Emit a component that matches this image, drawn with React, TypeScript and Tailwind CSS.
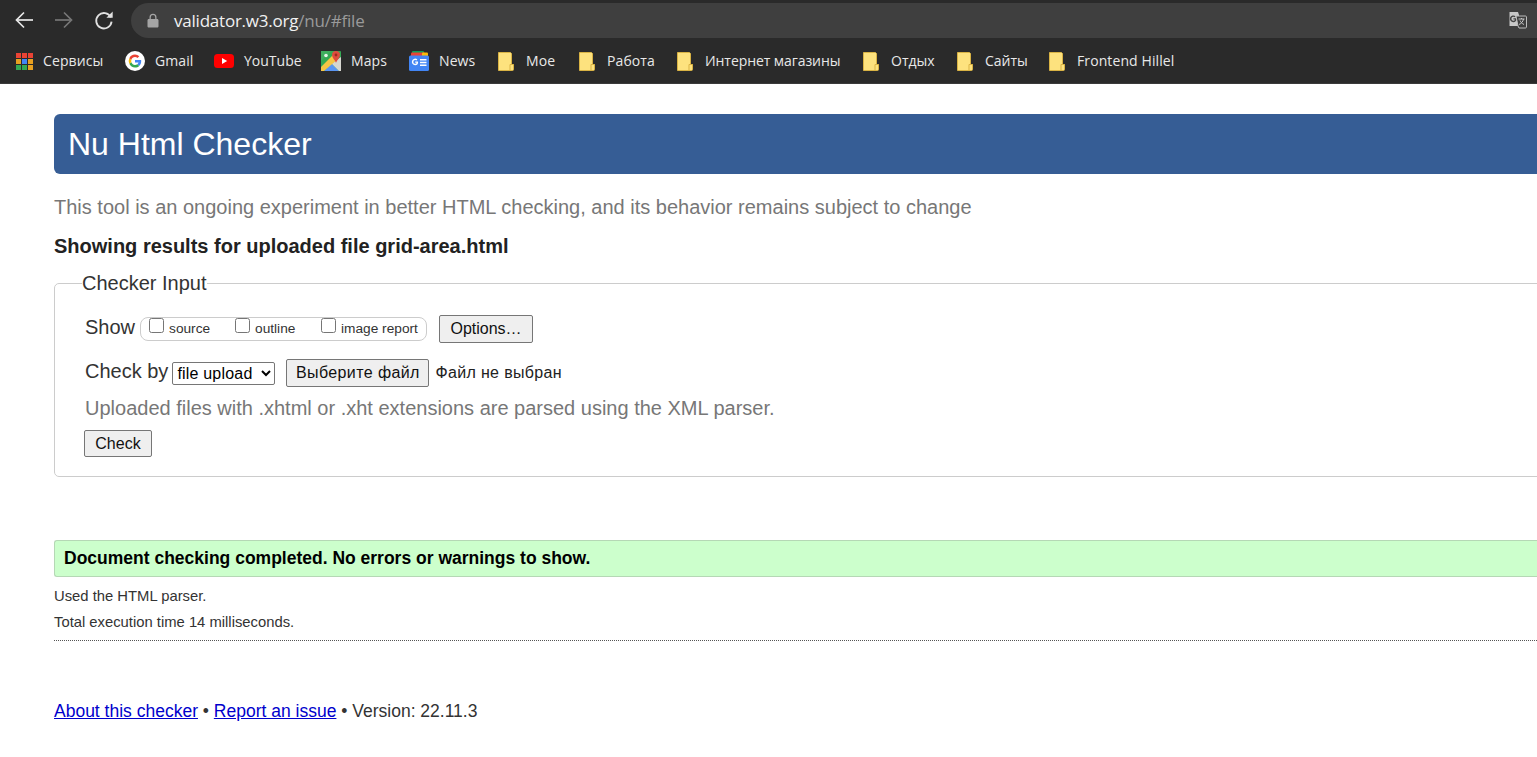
import React from "react";

const uiFont = "font-['Open_Sans',sans-serif]";

const BackIcon = ({ color }: { color: string }) => (
  <svg width="24" height="24" viewBox="0 0 24 24" fill="none" stroke={color} strokeWidth="1.700">
    <path d="M21 12H5" />
    <path d="M12 4.500L4.500 12l7.500 7.500" />
  </svg>
);

const ForwardIcon = ({ color }: { color: string }) => (
  <svg width="24" height="24" viewBox="0 0 24 24" fill="none" stroke={color} strokeWidth="1.700">
    <path d="M3 12h16" />
    <path d="M12 4.500l7.500 7.500-7.500 7.500" />
  </svg>
);

const ReloadIcon = () => (
  <svg width="26" height="26" viewBox="0 0 24 24" fill="none" stroke="#e0e0e0" strokeWidth="1.700">
    <path d="M18.300 9.500A7.100 7.100 0 1 0 19 13.500" />
    <path d="M20 4.200V10h-5.800z" fill="#e0e0e0" stroke="none" />
  </svg>
);

const LockIcon = () => (
  <svg width="12" height="15" viewBox="0 0 12 15" fill="#a5a5a5">
    <path d="M2.500 6V4.200a3.500 3.500 0 0 1 7 0V6h.7c.7 0 1.300.6 1.300 1.300v5.900c0 .7-.6 1.300-1.300 1.300H1.800c-.7 0-1.300-.6-1.300-1.300V7.300C.5 6.600 1.100 6 1.800 6h.7zm1.300 0h4.400V4.200a2.200 2.200 0 0 0-4.400 0V6z" />
  </svg>
);

const TranslateIcon = () => (
  <svg width="19" height="18" viewBox="0 0 19 18">
    <path d="M1.500 1h8.500l1 3v11H1.500z" fill="#c8c8c8" />
    <path d="M8 7.200H5.400v1.300H7c-.2.9-.8 1.300-1.600 1.300a2 2 0 0 1 0-4c.5 0 .9.2 1.200.5l1-1a3.400 3.400 0 1 0-2.200 5.900c2 0 3-1.400 3-3.300z" fill="#444" />
    <path d="M8 5h9.500c.5 0 1 .4 1 1v10c0 .6-.5 1-1 1H11l-1-2z" fill="#3e3e3e" stroke="#bdbdbd" strokeWidth="1" />
    <path d="M10.500 8h6M13.500 7v1M15.500 8c-.5 2.500-2 4.500-4.500 5.500M12 9.500c.8 1.800 2 3 4 4" fill="none" stroke="#c8c8c8" strokeWidth="1" />
  </svg>
);

const AppsIcon = () => {
  const colors = ["#ea4335", "#ea4335", "#ea4335", "#e8a020", "#4285f4", "#e8a020", "#34a853", "#34a853", "#e8a020"];
  return (
    <div className="grid grid-cols-3 gap-[1px] w-[17px] h-[17px]">
      {colors.map((c, i) => (
        <span key={i} className="block w-[5px] h-[5px]" style={{ backgroundColor: c }} />
      ))}
    </div>
  );
};

const GoogleIcon = () => (
  <svg width="20" height="20" viewBox="0 0 20 20">
    <circle cx="10" cy="10" r="10" fill="#fff" />
    <path d="M16.200 10.200c0-.5 0-.9-.1-1.300H10v2.500h3.500c-.2.800-.6 1.500-1.300 2l2 1.600c1.200-1.100 2-2.800 2-4.800z" fill="#4285f4" />
    <path d="M10 16.500c1.800 0 3.200-.6 4.200-1.600l-2-1.600c-.6.400-1.300.6-2.200.6-1.700 0-3.100-1.100-3.600-2.700l-2.100 1.600c1 2.200 3.200 3.700 5.700 3.700z" fill="#34a853" />
    <path d="M6.400 11.200a3.900 3.900 0 0 1 0-2.400L4.300 7.200a6.500 6.500 0 0 0 0 5.600z" fill="#fbbc05" />
    <path d="M10 6.100c1 0 1.800.3 2.500 1l1.800-1.800A6.300 6.300 0 0 0 10 3.500a6.500 6.500 0 0 0-5.700 3.700l2.100 1.600C6.900 7.200 8.300 6.100 10 6.100z" fill="#ea4335" />
  </svg>
);

const YoutubeIcon = () => (
  <svg width="20" height="14" viewBox="0 0 20 14">
    <rect width="20" height="14" rx="3.500" fill="#f00" />
    <path d="M8 4l5.200 3L8 10z" fill="#fff" />
  </svg>
);

const MapsIcon = () => (
  <svg width="20" height="20" viewBox="0 0 20 20">
    <rect width="20" height="20" rx="1" fill="#34a853" />
    <path d="M3 20l7.500-7.500L18 20z" fill="#5a95f2" />
    <path d="M10.500 12.500L20 6v14h-2z" fill="#d6d6d0" />
    <path d="M0 16L14 2l3 6L3 20H0z" fill="#f6c545" />
    <path d="M0 0h10L0 10z" fill="#3fae5e" />
    <circle cx="5" cy="4.500" r="1.800" fill="#e8f4ea" />
    <path d="M15 0a4 4 0 0 1 4 4c0 2.800-3 5-4 7.800-1-2.800-4-5-4-7.800a4 4 0 0 1 4-4z" fill="#dd4b3e" />
    <circle cx="15" cy="4" r="1.400" fill="#9c2a1e" />
  </svg>
);

const NewsIcon = () => (
  <svg width="20" height="20" viewBox="0 0 20 20">
    <rect x="3" y="0" width="12" height="6" rx="1" fill="#0c9d58" />
    <rect x="2" y="1.500" width="14" height="5" rx="1" fill="#ea4335" />
    <rect x="13" y="1.500" width="6" height="6" rx="1" fill="#fbbc05" />
    <rect x="0" y="4.500" width="20" height="15.500" rx="1.500" fill="#4285f4" />
    <path d="M9 10.500H6.200v1.300h1.500c-.2.700-.7 1-1.500 1a1.900 1.900 0 0 1 0-3.800c.5 0 .9.200 1.200.5l1-1a3.300 3.300 0 1 0-2.200 5.700c1.900 0 2.900-1.300 2.900-3z" fill="#fff" />
    <path d="M11 8h6.500v1.400H11zM11 10.800h6.500v1.400H11zM11 13.500h6.500v1.400H11z" fill="#fff" />
  </svg>
);

const FolderIcon = () => (
  <svg width="16" height="19" viewBox="0 0 16 19">
    <path d="M.5.500h12l1 1v11h2v5c0 .6-.4 1-1 1H.5z" fill="#fde27e" stroke="#d9b344" strokeWidth="1" />
    <path d="M12 18v-5.500h3.500" fill="none" stroke="#d9b344" strokeWidth="1" />
  </svg>
);

const bookmarks: { icon: React.ReactNode; label: string; width: string; gap: string; track: string }[] = [
  { icon: <AppsIcon />, label: "Сервисы", width: "w-[109px]", gap: "ml-[7px]", track: "tracking-[0.1px]" },
  { icon: <GoogleIcon />, label: "Gmail", width: "w-[89px]", gap: "ml-[10px]", track: "tracking-[0.1px]" },
  { icon: <YoutubeIcon />, label: "YouTube", width: "w-[107px]", gap: "ml-[10px]", track: "tracking-[0px]" },
  { icon: <MapsIcon />, label: "Maps", width: "w-[88px]", gap: "ml-[10px]", track: "tracking-[0.1px]" },
  { icon: <NewsIcon />, label: "News", width: "w-[89px]", gap: "ml-[10px]", track: "tracking-[0.1px]" },
  { icon: <FolderIcon />, label: "Мое", width: "w-[81px]", gap: "ml-[8px]", track: "tracking-[0.1px]" },
  { icon: <FolderIcon />, label: "Работа", width: "w-[98px]", gap: "ml-[8px]", track: "tracking-[0.1px]" },
  { icon: <FolderIcon />, label: "Интернет магазины", width: "w-[186px]", gap: "ml-[8px]", track: "tracking-[-0.07px]" },
  { icon: <FolderIcon />, label: "Отдых", width: "w-[94px]", gap: "ml-[8px]", track: "tracking-[0px]" },
  { icon: <FolderIcon />, label: "Сайты", width: "w-[92px]", gap: "ml-[8px]", track: "tracking-[0px]" },
  { icon: <FolderIcon />, label: "Frontend Hillel", width: "w-[140px]", gap: "ml-[8px]", track: "tracking-[0.1px]" },
];

const BrowserChrome = () => (
  <div className={`bg-[#2a2a2a] border-b border-[#3a3a3a] ${uiFont}`}>
    <div className="flex items-center h-[40px] pl-[12px]">
      <div className="flex items-center gap-[16px] w-[119px]">
        <BackIcon color="#e8e8e8" />
        <ForwardIcon color="#777777" />
        <div className="-ml-[1px]">
          <ReloadIcon />
        </div>
      </div>
      <div className="flex items-center flex-1 h-[35px] bg-[#3f3f3f] rounded-l-full pl-[16px] pr-[10px]">
        <LockIcon />
        <div className="ml-[15px] text-[17px] leading-none flex-1 tracking-[-0.22px]">
          <span className="text-[#f1f1f1]">validator.w3.org</span>
          <span className="text-[#9a9a9a]">/nu/#file</span>
        </div>
        <TranslateIcon />
      </div>
    </div>
    <div className="flex items-center h-[43px] pb-[1px] pl-[16px]">
      {bookmarks.map((b) => (
        <div key={b.label} className={`flex items-center shrink-0 ${b.width}`}>
          <div className="w-[20px] flex items-center justify-start">{b.icon}</div>
          <span className={`${b.gap} ${b.track} text-[14px] leading-none text-[#e8e8e8] whitespace-nowrap`}>
            {b.label}
          </span>
        </div>
      ))}
    </div>
  </div>
);

const nativeBtn =
  "bg-[#efefef] border border-[#767676] rounded-[2px] text-[16px] text-[#111] leading-none";

const Checkbox = ({ label, width }: { label: string; width: string }) => (
  <label className={`flex items-center mb-[4px] ${width}`}>
    <input type="checkbox" className="w-[15px] h-[15px] m-0 ml-[2px] mr-[5px] -mt-[2px]" />
    <span className="text-[13.7px] leading-none text-[#333] mt-[4px]">{label}</span>
  </label>
);

const CheckerForm = () => (
  <fieldset className="border border-[#ccc] rounded-[5px] -mr-2 pl-[30px] pt-[21px] pb-[19px] mt-[16px]">
    <legend className="text-[20px] leading-[23px] text-[#333] -ml-[3px] -mb-px">Checker Input</legend>
    <div className="flex items-center h-[28px]">
      <span className="text-[20px] text-[#333] leading-none mb-[4px]">Show</span>
      <div className="flex items-center ml-[5px] w-[287px] h-[24px] border border-[#ccc] rounded-[8px] pl-[6px]">
        <Checkbox label="source" width="w-[86px]" />
        <Checkbox label="outline" width="w-[86px]" />
        <Checkbox label="image report" width="w-[105px]" />
      </div>
      <button className={`${nativeBtn} ml-[12px] w-[94px] h-[28px]`}>Options…</button>
    </div>
    <div className="flex items-center h-[28px] mt-[16px]">
      <span className="text-[20px] text-[#333] leading-none mb-[4px]">Check by</span>
      <select className="ml-[4px] w-[103px] h-[23px] border border-[#767676] rounded-[2px] bg-white text-[16px] text-black tracking-[0.2px]">
        <option>file upload</option>
      </select>
      <button className={`${nativeBtn} ml-[11px] w-[143px] h-[28px] tracking-[0.4px]`}>Выберите файл</button>
      <span className="ml-[6px] text-[16px] text-[#222] tracking-[0.35px]">Файл не выбран</span>
    </div>
    <p className="text-[20px] leading-none text-[#777] mt-[11px]">
      Uploaded files with .xhtml or .xht extensions are parsed using the XML parser.
    </p>
    <button className={`${nativeBtn} w-[68px] h-[27px] mt-[12px] -ml-px block`}>Check</button>
  </fieldset>
);

export default function App() {
  return (
    <div className="h-[757px] overflow-hidden bg-white font-['Liberation_Sans',Arial,sans-serif]">
      <BrowserChrome />
      <main className="pl-[54px] pt-[30px]">
        <h1 className="flex items-center h-[60px] bg-[#365d95] rounded-l-[6px] pl-[14px] text-[32px] text-white leading-none">
          Nu Html Checker
        </h1>
        <p className="text-[20px] leading-none text-[#777] mt-[23px]">
          This tool is an ongoing experiment in better HTML checking, and its behavior remains subject to change
        </p>
        <p className="text-[20px] leading-none font-bold text-[#222] mt-[19px]">
          Showing results for uploaded file grid-area.html
        </p>
        <CheckerForm />
        <div className="flex items-center h-[37px] mt-[63px] bg-[#ccffcc] border border-[#b5d8b5] border-r-0 rounded-l-[3px] pl-[9px] text-[17.5px] font-bold text-black">
          Document checking completed. No errors or warnings to show.
        </div>
        <p className="text-[14.8px] leading-none text-[#333] mt-[12px]">Used the HTML parser.</p>
        <p className="text-[14.8px] leading-none text-[#333] mt-[11px]">Total execution time 14 milliseconds.</p>
        <div className="border-b border-dotted border-[#555] h-[11px]" />
        <p className="text-[17.5px] leading-none text-[#333] mt-[62px]">
          <a className="text-[#0000cc] underline" href="#about">About this checker</a>
          {" • "}
          <a className="text-[#0000cc] underline" href="#report">Report an issue</a>
          {" • Version: 22.11.3"}
        </p>
      </main>
    </div>
  );
}
